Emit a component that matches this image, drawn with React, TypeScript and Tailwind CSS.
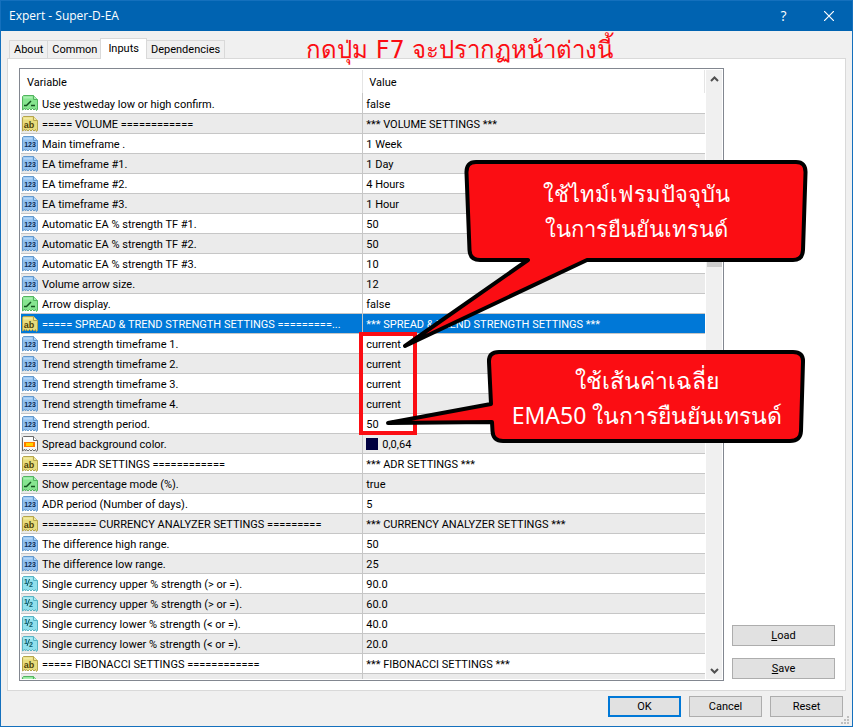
import type { ReactNode } from "react";

type Kind = "bool" | "text" | "int" | "double" | "color";
type Row = { kind: Kind; name: string; value: string; selected?: boolean; swatch?: boolean };

const rows: Row[] = [
  { kind: "bool", name: "Use yestweday low or high confirm.", value: "false" },
  { kind: "text", name: "===== VOLUME ============", value: "*** VOLUME SETTINGS ***" },
  { kind: "int", name: "Main timeframe .", value: "1 Week" },
  { kind: "int", name: "EA timeframe #1.", value: "1 Day" },
  { kind: "int", name: "EA timeframe #2.", value: "4 Hours" },
  { kind: "int", name: "EA timeframe #3.", value: "1 Hour" },
  { kind: "int", name: "Automatic EA % strength TF #1.", value: "50" },
  { kind: "int", name: "Automatic EA % strength TF #2.", value: "50" },
  { kind: "int", name: "Automatic EA % strength TF #3.", value: "10" },
  { kind: "int", name: "Volume arrow size.", value: "12" },
  { kind: "bool", name: "Arrow display.", value: "false" },
  {
    kind: "text",
    name: "===== SPREAD & TREND STRENGTH SETTINGS =========...",
    value: "*** SPREAD & TREND STRENGTH SETTINGS ***",
    selected: true,
  },
  { kind: "int", name: "Trend strength timeframe 1.", value: "current" },
  { kind: "int", name: "Trend strength timeframe 2.", value: "current" },
  { kind: "int", name: "Trend strength timeframe 3.", value: "current" },
  { kind: "int", name: "Trend strength timeframe 4.", value: "current" },
  { kind: "int", name: "Trend strength period.", value: "50" },
  { kind: "color", name: "Spread background color.", value: "0,0,64", swatch: true },
  { kind: "text", name: "===== ADR SETTINGS ============", value: "*** ADR SETTINGS ***" },
  { kind: "bool", name: "Show percentage mode (%).", value: "true" },
  { kind: "int", name: "ADR period (Number of days).", value: "5" },
  { kind: "text", name: "========= CURRENCY ANALYZER SETTINGS =========", value: "*** CURRENCY ANALYZER SETTINGS ***" },
  { kind: "int", name: "The difference high range.", value: "50" },
  { kind: "int", name: "The difference low range.", value: "25" },
  { kind: "double", name: "Single currency upper % strength (> or =).", value: "90.0" },
  { kind: "double", name: "Single currency upper % strength (> or =).", value: "60.0" },
  { kind: "double", name: "Single currency lower % strength (< or =).", value: "40.0" },
  { kind: "double", name: "Single currency lower % strength (< or =).", value: "20.0" },
  { kind: "text", name: "===== FIBONACCI SETTINGS ============", value: "*** FIBONACCI SETTINGS ***" },
  { kind: "bool", name: "", value: "" },
];

const palette: Record<Kind, { fill: string; light: string; edge: string; ink: string }> = {
  bool: { fill: "#86e58f", light: "#a9efb0", edge: "#52b35f", ink: "#14521f" },
  text: { fill: "#e8dc7c", light: "#f3eaa0", edge: "#b5a44c", ink: "#4d4208" },
  int: { fill: "#8fc0f0", light: "#b3d6f8", edge: "#6298cc", ink: "#0b2a52" },
  double: { fill: "#8fdfec", light: "#aeeaf3", edge: "#56b3c4", ink: "#0d5866" },
  color: { fill: "#f7f7f7", light: "#ffffff", edge: "#6a6a6a", ink: "#ff8a00" },
};

function KindIcon({ kind }: { kind: Kind }) {
  const c = palette[kind];
  return (
    <svg width="16" height="16" viewBox="0 0 16 16" className="shrink-0" aria-hidden="true">
      <path
        d="M.5 1.5l1-1h10l4 4v10l-1 1-1-2-1.500 1.500-1.500-1.500-1.500 1.500-1.500-1.500-1.500 1.500-1.500-1.500-1 1.500-1-2-1 1.500-1 .5z"
        fill={c.fill}
        stroke={c.edge}
      />
      <path d="M1.5 1.5h9v2h-9z" fill={c.light} />
      <path d="M11.5 .5v4h4" fill={c.light} stroke={c.edge} />
      {kind === "bool" && <path d="M2 10.5h2.500L9 6M9 10.500h4" fill="none" stroke={c.ink} strokeWidth="1.500" />}
      {kind === "color" && (
        <>
          <rect x="2" y="6" width="11" height="5" fill="#ff7a00" />
          <rect x="4" y="7" width="7" height="3" fill="#ffd400" />
        </>
      )}
      {kind === "int" && (
        <text x="8" y="11" textAnchor="middle" fontSize="7" fontWeight="700" fontFamily="Liberation Sans, sans-serif" fill={c.ink}>
          123
        </text>
      )}
      {kind === "text" && (
        <text x="7" y="12" textAnchor="middle" fontSize="9" fontWeight="700" fontFamily="Liberation Sans, sans-serif" fill={c.ink}>
          ab
        </text>
      )}
      {kind === "double" && (
        <>
          <text x="2" y="8" fontSize="7" fontWeight="700" fontFamily="Liberation Sans, sans-serif" fill={c.ink}>
            1
          </text>
          <path d="M7.500 3L5 10" stroke={c.ink} />
          <text x="7" y="11" fontSize="7" fontWeight="700" fontFamily="Liberation Sans, sans-serif" fill={c.ink}>
            2
          </text>
        </>
      )}
    </svg>
  );
}

function Tab({ children, active }: { children: ReactNode; active?: boolean }) {
  return active ? (
    <button
      type="button"
      role="tab"
      aria-selected="true"
      className="relative -mx-px -mb-px h-[21px] border border-b-0 border-[#d9d9d9] bg-white px-[7px] pb-px"
    >
      {children}
    </button>
  ) : (
    <button
      type="button"
      role="tab"
      aria-selected="false"
      className="-mr-px h-[18px] border border-b-0 border-[#d9d9d9] bg-[#f0f0f0] px-1"
    >
      {children}
    </button>
  );
}

function PushButton({ children, primary, wide }: { children: ReactNode; primary?: boolean; wide?: boolean }) {
  return (
    <button
      type="button"
      className={`h-[21px] bg-[#e1e1e1] ${wide ? "w-full" : "w-[73px]"} ${
        primary ? "border-2 border-[#0078d7]" : "border border-[#adadad]"
      }`}
    >
      {children}
    </button>
  );
}

function Chevron({ up }: { up?: boolean }) {
  return (
    <svg width="9" height="6" viewBox="0 0 9 6" fill="none" stroke="#505050" strokeWidth="2" aria-hidden="true">
      <path d={up ? "M1 5l3.500-3.500L8 5" : "M1 1l3.500 3.500L8 1"} />
    </svg>
  );
}

function ValuesTable() {
  return (
    <table className="w-full table-fixed border-collapse text-left">
      <thead>
        <tr className="h-[23px]">
          <th scope="col" className="w-1/2 border-r border-[#e5e5e5] p-0 pt-[2px] pl-[6px] font-normal">
            Variable
          </th>
          <th scope="col" className="w-1/2 border-r border-[#e5e5e5] p-0 pt-[2px] pl-[6px] font-normal">
            Value
          </th>
        </tr>
      </thead>
      <tbody>
        {rows.map((r, i) => (
          <tr
            key={i}
            className={`h-5 border-b border-[#c6c6c6] ${
              r.selected ? "bg-[#0078d7] text-white" : i % 2 ? "bg-[#ebebeb]" : "bg-white"
            }`}
          >
            <td className="border-r border-[#c6c6c6] p-0">
              <div className="flex h-[19px] items-center gap-1 pt-px pl-px">
                <KindIcon kind={r.kind} />
                <span className="pt-[3px] whitespace-nowrap">{r.name}</span>
              </div>
            </td>
            <td className="p-0">
              <div className="flex h-[19px] items-center gap-1 pt-px pl-[3px]">
                {r.swatch && <span className="h-3 w-3 bg-[#000040]" />}
                <span className="pt-[3px] whitespace-nowrap">{r.value}</span>
              </div>
            </td>
          </tr>
        ))}
      </tbody>
    </table>
  );
}

export default function App() {
  return (
    <div className="relative flex h-screen flex-col overflow-hidden border border-[#1470bd] bg-[#f0f0f0] font-['Roboto','Liberation_Sans',sans-serif] text-[11px] leading-4 text-black">
      <header className="-mx-px flex h-[30px] shrink-0 items-center justify-between bg-[#0063b1] pl-[9px] text-white">
        <h1 className="font-['Open_Sans',sans-serif] text-xs">Expert - Super-D-EA</h1>
        <div className="flex h-full">
          <button type="button" aria-label="Help" className="w-[43px] font-['Open_Sans',sans-serif] text-sm">
            ?
          </button>
          <button type="button" aria-label="Close" className="flex w-12 items-center justify-center">
            <svg width="10" height="10" viewBox="0 0 10 10" fill="none" stroke="white" strokeWidth="1.200" aria-hidden="true">
              <path d="M0 0l10 10M10 0L0 10" />
            </svg>
          </button>
        </div>
      </header>

      <div className="flex min-h-0 flex-1 flex-col px-[6px] pt-[7px]">
        <div role="tablist" className="flex h-5 items-end pl-[2px]">
          <Tab>About</Tab>
          <Tab>Common</Tab>
          <Tab active>Inputs</Tab>
          <Tab>Dependencies</Tab>
        </div>

        <main className="flex min-h-0 flex-1 gap-2 border border-[#d9d9d9] bg-white pt-[9px] pr-[10px] pb-[9px] pl-[11px]">
          <section className="flex min-w-0 flex-1 border border-[#828790] p-px">
            <div className="min-w-0 flex-1 overflow-hidden">
              <ValuesTable />
            </div>
            <div className="ml-px flex w-4 flex-col items-center justify-between bg-[#f0f0f0] pt-[6px] pb-[5px]">
              <Chevron up />
              <div className="mt-[87px] mb-auto h-[98px] w-[15px] bg-[#cdcdcd]" />
              <Chevron />
            </div>
          </section>
          <aside className="flex w-[103px] flex-col justify-end gap-3 pb-[2px]">
            <PushButton wide>
              <u>L</u>oad
            </PushButton>
            <PushButton wide>
              <u>S</u>ave
            </PushButton>
          </aside>
        </main>

        <footer className="flex shrink-0 justify-end gap-2 pt-[5px] pr-[3px] pb-[9px]">
          <PushButton primary>OK</PushButton>
          <PushButton>Cancel</PushButton>
          <PushButton>Reset</PushButton>
        </footer>
      </div>

      <svg width="8" height="8" viewBox="0 0 8 8" fill="#bfbfbf" className="absolute right-[3px] bottom-[2px]" aria-hidden="true">
        <path d="M6 0h2v2h-2zM3 3h2v2h-2zM6 3h2v2h-2zM0 6h2v2h-2zM3 6h2v2h-2zM6 6h2v2h-2z" />
      </svg>

      {/* Annotations laid over the dialog */}
      <p className="absolute top-[31px] left-[305px] font-['DejaVu_Sans',sans-serif] text-2xl leading-9 whitespace-nowrap text-[#fb0d13]">
        กดปุ่ม F7 จะปรากฏหน้าต่างนี้
      </p>
      <svg
        width="853"
        height="727"
        viewBox="0 0 853 727"
        className="pointer-events-none absolute -top-px -left-px"
        fill="#fb0d13"
        stroke="black"
        strokeWidth="4"
        strokeLinejoin="round"
        aria-hidden="true"
      >
        <rect x="361" y="334" width="54" height="99" fill="none" stroke="#fb0d13" strokeLinejoin="miter" />
        <path d="M476 162H796Q806 162 805.500 173L803 250Q802.500 260 793 260H587L405 346L528 260H480Q470 260 469.500 250L466.500 173Q466 162 476 162Z" />
        <path d="M499 352H793Q803.500 352 803 362L801 431Q800.500 441 790 441H503Q493 441 492.500 431L492 422L388 423L491 404L489 362Q488.500 352 499 352Z" />
      </svg>
      <p className="absolute top-[175px] left-[466px] w-[338px] text-center font-['Noto_Sans',sans-serif] text-[22px] leading-[35px] text-white">
        ใช้ไทม์เฟรมปัจจุบัน
        <br />
        ในการยืนยันเทรนด์
      </p>
      <p className="absolute top-[362px] left-[488px] w-[316px] text-center font-['Noto_Sans',sans-serif] text-[23px] leading-[35px] text-white">
        ใช้เส้นค่าเฉลี่ย
        <br />
        EMA50 ในการยืนยันเทรนด์
      </p>
    </div>
  );
}
